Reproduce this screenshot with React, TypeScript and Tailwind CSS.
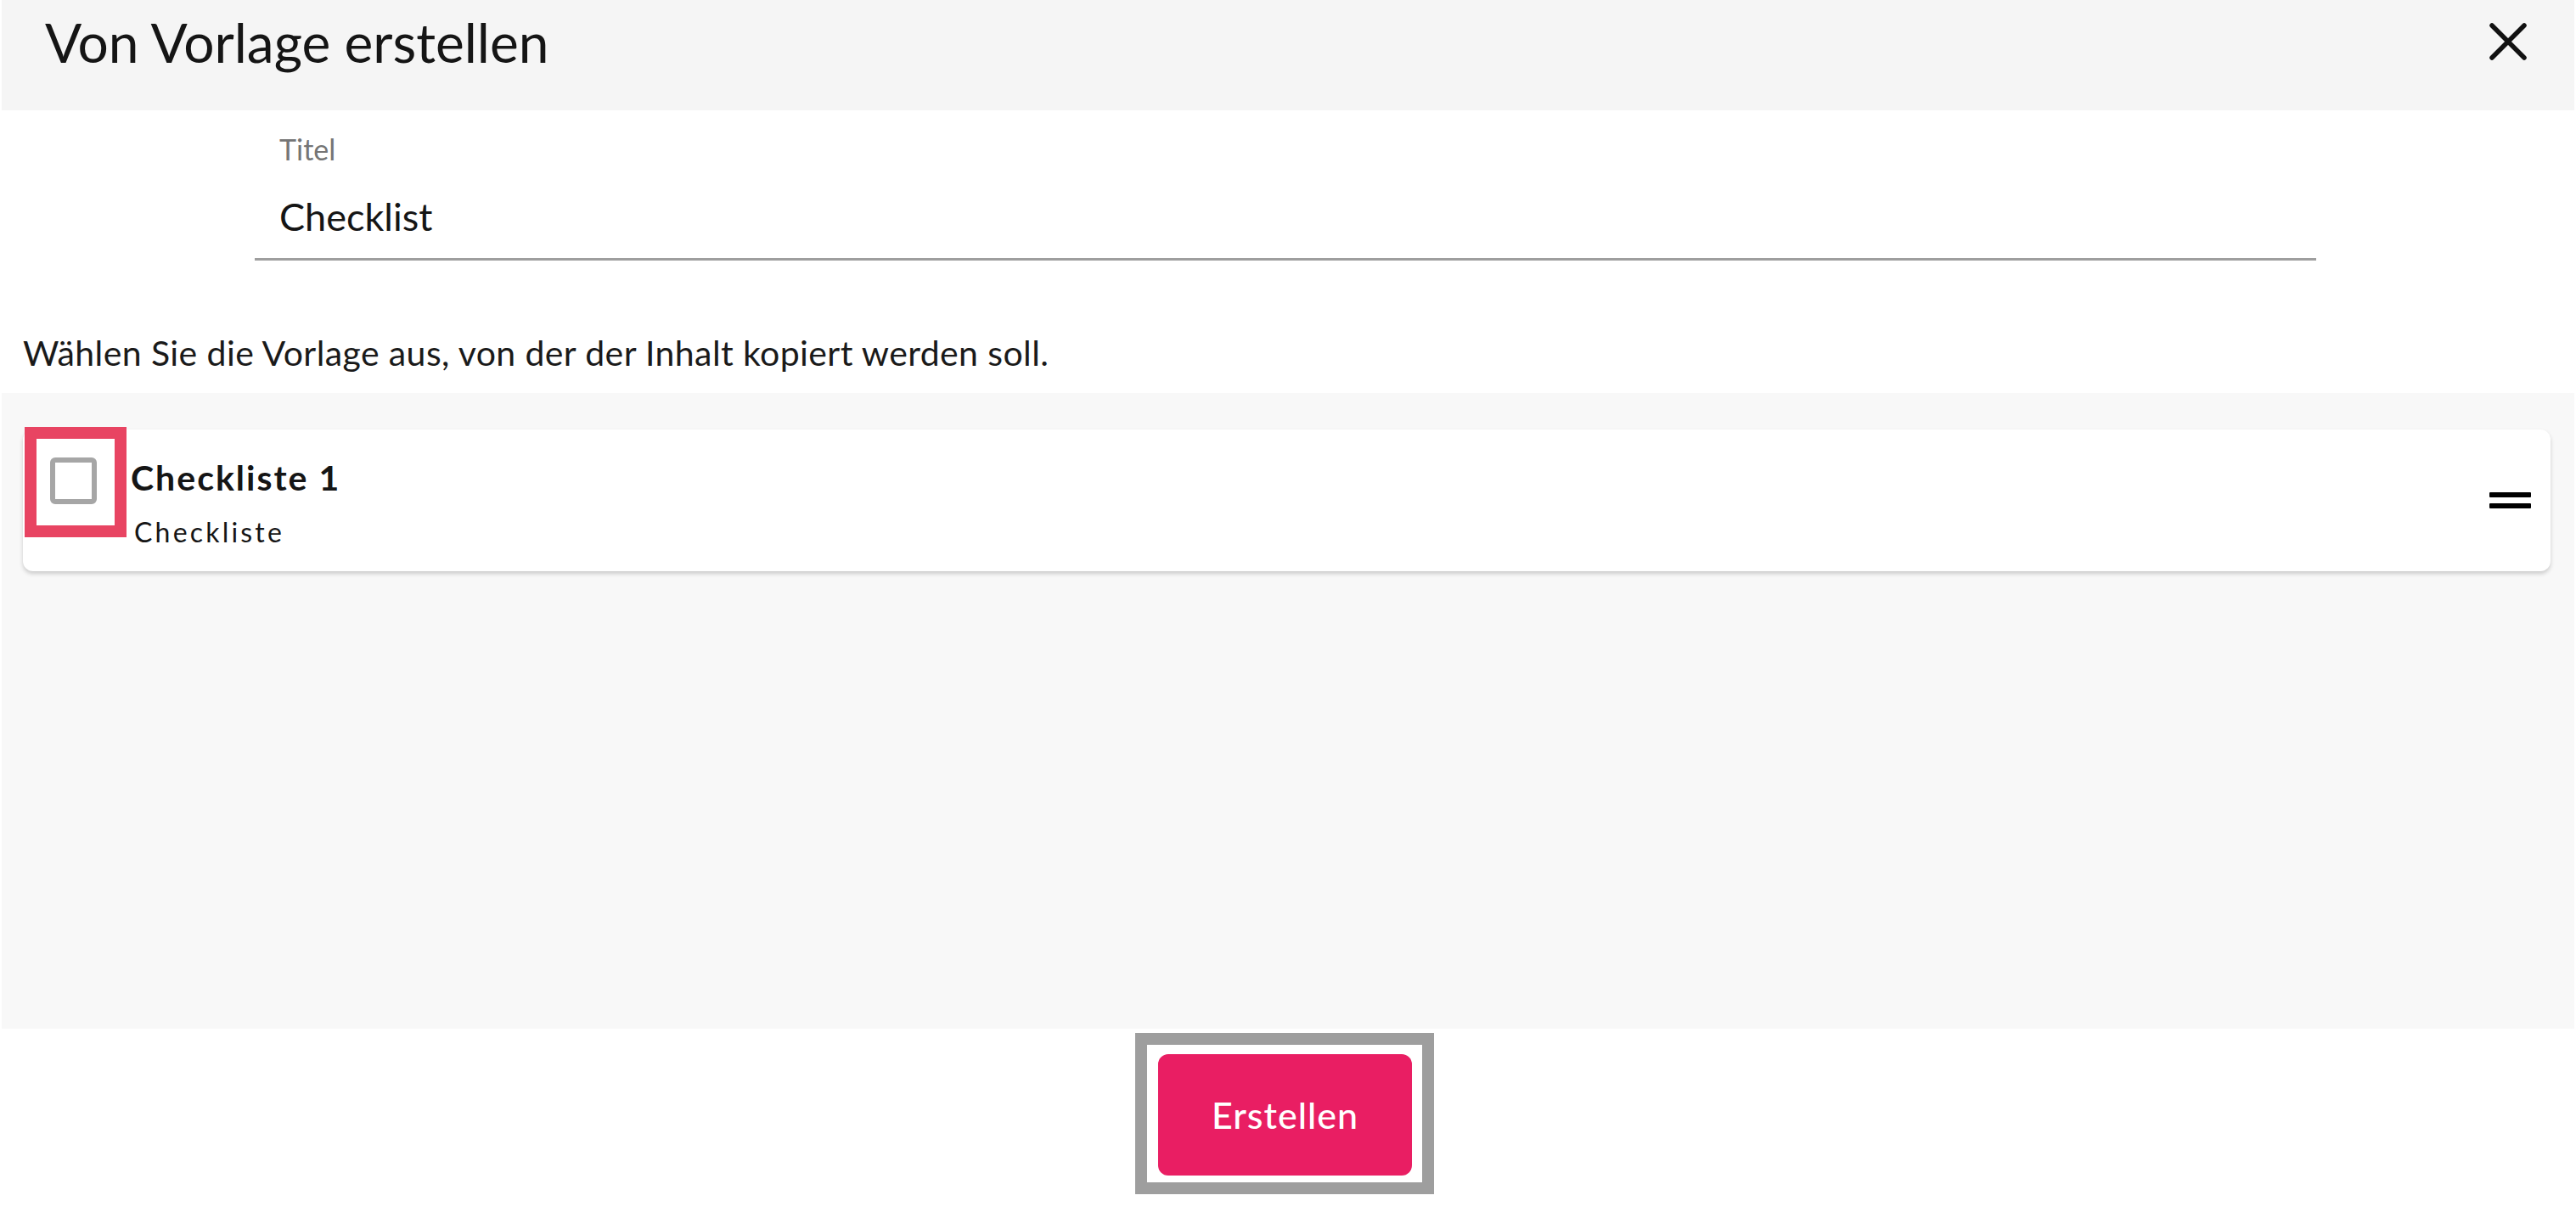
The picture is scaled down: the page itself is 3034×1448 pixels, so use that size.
import React from 'react';

const FONT = { fontFamily: 'Lato, "Open Sans", sans-serif' };

const CloseIcon = () => (
  <svg width="48" height="48" viewBox="0 0 48 48">
    <path d="M5 5 L43 43 M43 5 L5 43" stroke="#111" strokeWidth="5.5" strokeLinecap="round" />
  </svg>
);

const DragHandle = () => (
  <div className="flex flex-col gap-[7px] w-[49px] mt-[41px]">
    <div className="h-[6px] bg-black rounded-[1px]" />
    <div className="h-[6px] bg-black rounded-[1px]" />
  </div>
);

export default function App() {
  return (
    <div className="w-[3034px] h-[1448px] bg-white px-[2px] flex flex-col text-[#1a1a1a]" style={FONT}>
      {/* Header */}
      <div className="h-[130px] shrink-0 bg-[#f5f5f5] flex items-start justify-between pl-[51px] pr-[54px] pt-[12px]">
        <h1 className="text-[64px] leading-[76px] font-normal text-[#151515]">Von Vorlage erstellen</h1>
        <button className="mt-[13px]"><CloseIcon /></button>
      </div>

      {/* Title field */}
      <div className="ml-[298px] w-[2428px] pt-[26px] shrink-0">
        <label className="block pl-[29px] text-[34px] leading-[40px] text-[#757575]">Titel</label>
        <div className="mt-[32px] pl-[29px] pb-[22px] text-[45px] leading-[54px] text-[#151515] border-b-[3px] border-[#9e9e9e]">
          Checklist
        </div>
      </div>

      {/* Description */}
      <p className="pl-[25px] pt-[85px] h-[156px] shrink-0 text-[41px] leading-[48px] tracking-[0.4px] text-[#1a1a1a]">
        Wählen Sie die Vorlage aus, von der der Inhalt kopiert werden soll.
      </p>

      {/* Template list */}
      <div className="h-[749px] shrink-0 bg-[#f8f8f8] pl-[25px] pr-[28px] pt-[43px]">
        <div className="relative h-[167px] bg-white rounded-[12px] shadow-[0_3px_5px_rgba(0,0,0,0.18)] flex items-start pl-[32px] pr-[23px] pt-[33px]">
          <div className="w-[55px] h-[55px] border-[6px] border-[#a6a6a6] rounded-[6px]" />
          <div className="ml-[40px] flex-1">
            <div className="text-[41px] leading-[48px] font-bold text-[#151515] tracking-[2px]">Checkliste 1</div>
            <div className="mt-[20px] pl-[4px] text-[32px] leading-[40px] text-[#151515] tracking-[3.2px]">Checkliste</div>
          </div>
          <DragHandle />
          {/* highlight overlay */}
          <div className="absolute left-[2px] top-[-3px] w-[120px] h-[130px] border-[14px] border-[#e84462]" />
        </div>
      </div>

      {/* Footer */}
      <div className="flex justify-center pt-[5px] pr-[8px]">
        <div className="border-[14px] border-[#9e9e9e] pt-[11px] pb-[8px] pl-[13px] pr-[12px]">
          <button className="w-[299px] h-[143px] rounded-[12px] bg-[#e91e63] text-white text-[43px] leading-[52px] font-medium tracking-[1px] flex items-center justify-center">
            Erstellen
          </button>
        </div>
      </div>
    </div>
  );
}
